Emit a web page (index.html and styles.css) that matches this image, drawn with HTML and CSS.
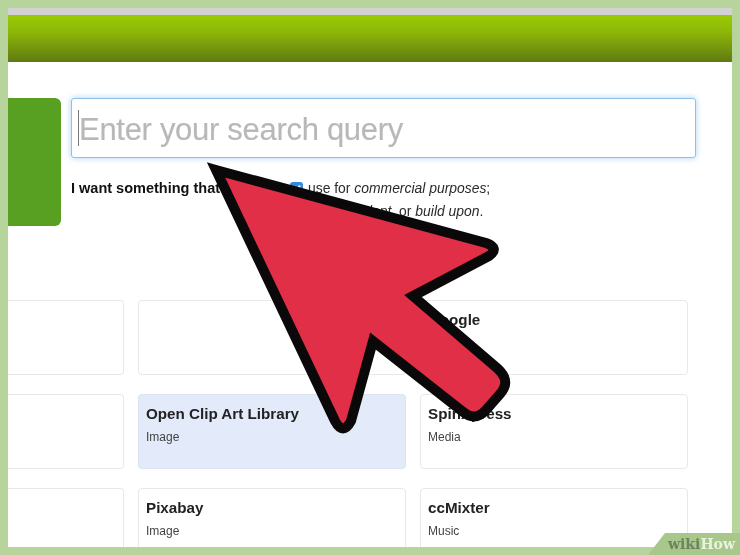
FILE: index.html
```html
<!DOCTYPE html>
<html>
<head>
<title>Search</title>
<link rel="stylesheet" href="styles.css">
</head>
<body>
<div class="page">
  <div class="topline"></div>
  <div class="header"></div>
  <div class="search-row">
    <div class="green-box"></div>
    <form class="search-form">
      <div class="search-input"><span class="caret"></span><span class="placeholder">Enter your search query</span></div>
      <div class="options">
        <b class="options-label">I want something that I can:</b>
        <div class="options-list">
          <div><span class="check"><svg width="13" height="13" viewBox="0 0 13 13"><path d="M3 7 L5.5 9.5 L10 3.5" fill="none" stroke="#fff" stroke-width="2"/></svg></span>use for <i>commercial purposes</i>;</div>
          <div class="second"><span class="check"></span><i>modify</i>, <i>adapt</i>, or <i>build upon</i>.</div>
        </div>
      </div>
    </form>
  </div>
  <div class="cards">
    <div class="card"></div>
    <div class="card"></div>
    <div class="card"><h3>Google</h3><p>Web</p></div>
    <div class="card"></div>
    <div class="card active"><h3>Open Clip Art Library</h3><p>Image</p></div>
    <div class="card"><h3>SpinXpress</h3><p>Media</p></div>
    <div class="card"></div>
    <div class="card"><h3>Pixabay</h3><p>Image</p></div>
    <div class="card"><h3>ccMixter</h3><p>Music</p></div>
  </div>
</div>

<svg class="arrow" width="740" height="555" viewBox="0 0 740 555">
  <path d="M216 170 L486 243 Q500 248 489 256 L413 296 L497 368 C508 378 507 386 500 394 L486 410 C478 419 470 418 462 411 L373 341 L351 421 Q343 436 335 421 Z" fill="#e02f47" stroke="#0b0809" stroke-width="10" stroke-linejoin="miter" stroke-miterlimit="2.4"/>
</svg>

<div class="watermark"><span class="wiki">wiki</span><span class="how">How</span></div>
</body>
</html>
```

FILE: styles.css
```css
body {
    margin: 0;
    width: 740px;
    height: 555px;
    padding: 8px;
    box-sizing: border-box;
    background-color: #b7d49c;
    font-family: "Liberation Sans", Arial, sans-serif;
    overflow: hidden;
}

.page {
    height: 539px;
    background-color: #fff;
    overflow: hidden;
    filter: blur(0.4px);
}

.topline {
    height: 7px;
    background-color: #d2d2d2;
}

.header {
    height: 47px;
    background: linear-gradient(#99cb04, #8eb808 35%, #5f7a12);
}

.search-row {
    display: flex;
    margin-top: 36px;
    height: 128px;
}

.green-box {
    width: 53px;
    background-color: #57a021;
    border-radius: 0 6px 6px 0;
}

.search-form {
    margin-left: 10px;
    width: 625px;
}

.search-input {
    box-sizing: border-box;
    height: 60px;
    display: flex;
    align-items: center;
    padding-left: 6px;
    border: 1.5px solid #8fc0e6;
    border-radius: 3px;
    box-shadow: 0 0 6px rgba(120,180,235,0.6);
    color: #b8b8b8;
    font-size: 31px;
}

.placeholder {
    padding-top: 4px;
    letter-spacing: -0.3px;
    -webkit-text-stroke: 0.15px #b8b8b8;
}

.caret {
    width: 1px;
    height: 36px;
    background-color: #777;
}

.options {
    display: flex;
    margin-top: 22px;
    font-size: 14.5px;
}

.options-label {
    width: 219px;
    color: #111;
}

.options-list {
    font-size: 13.9px;
    color: #2a2a2a;
}

.second {
    margin-top: 7px;
}

.check {
    display: inline-block;
    width: 13px;
    height: 13px;
    margin-right: 5px;
    vertical-align: -2px;
    border-radius: 3px;
    background-color: #2f8be0;
}

.check svg {
    display: block;
}

.cards {
    display: grid;
    grid-template-columns: 116px 268px 268px;
    column-gap: 14px;
    row-gap: 19px;
    margin-top: 74px;
}

.card {
    box-sizing: border-box;
    height: 75px;
    padding: 9px 7px;
    border: 1.5px solid #e8e8e8;
    border-radius: 4px;
    color: #222;
}

.card:nth-child(3n+1) {
    border-left: none;
    border-radius: 0 4px 4px 0;
}

.card.active {
    background-color: #e3eafa;
    border-color: #dbe4f5;
}

.card h3 {
    margin: 0;
    font-size: 15.2px;
    line-height: 20px;
}

.card p {
    margin: 6px 0 0;
    font-size: 12px;
    color: #444;
}

.arrow {
    position: absolute;
    left: 0;
    top: 0;
}

.watermark {
    position: absolute;
    right: 0;
    bottom: 0;
    width: 92px;
    height: 22px;
    box-sizing: border-box;
    padding: 3px 5px 0 0;
    text-align: right;
    background-color: #a8c78b;
    clip-path: polygon(17px 0, 100% 0, 100% 100%, 0 100%);
    font-family: "DejaVu Serif", serif;
    font-weight: bold;
    font-size: 14px;
    filter: blur(0.4px);
}

.wiki {
    color: #6d8360;
}

.how {
    color: #eaf2e0;
}
```
